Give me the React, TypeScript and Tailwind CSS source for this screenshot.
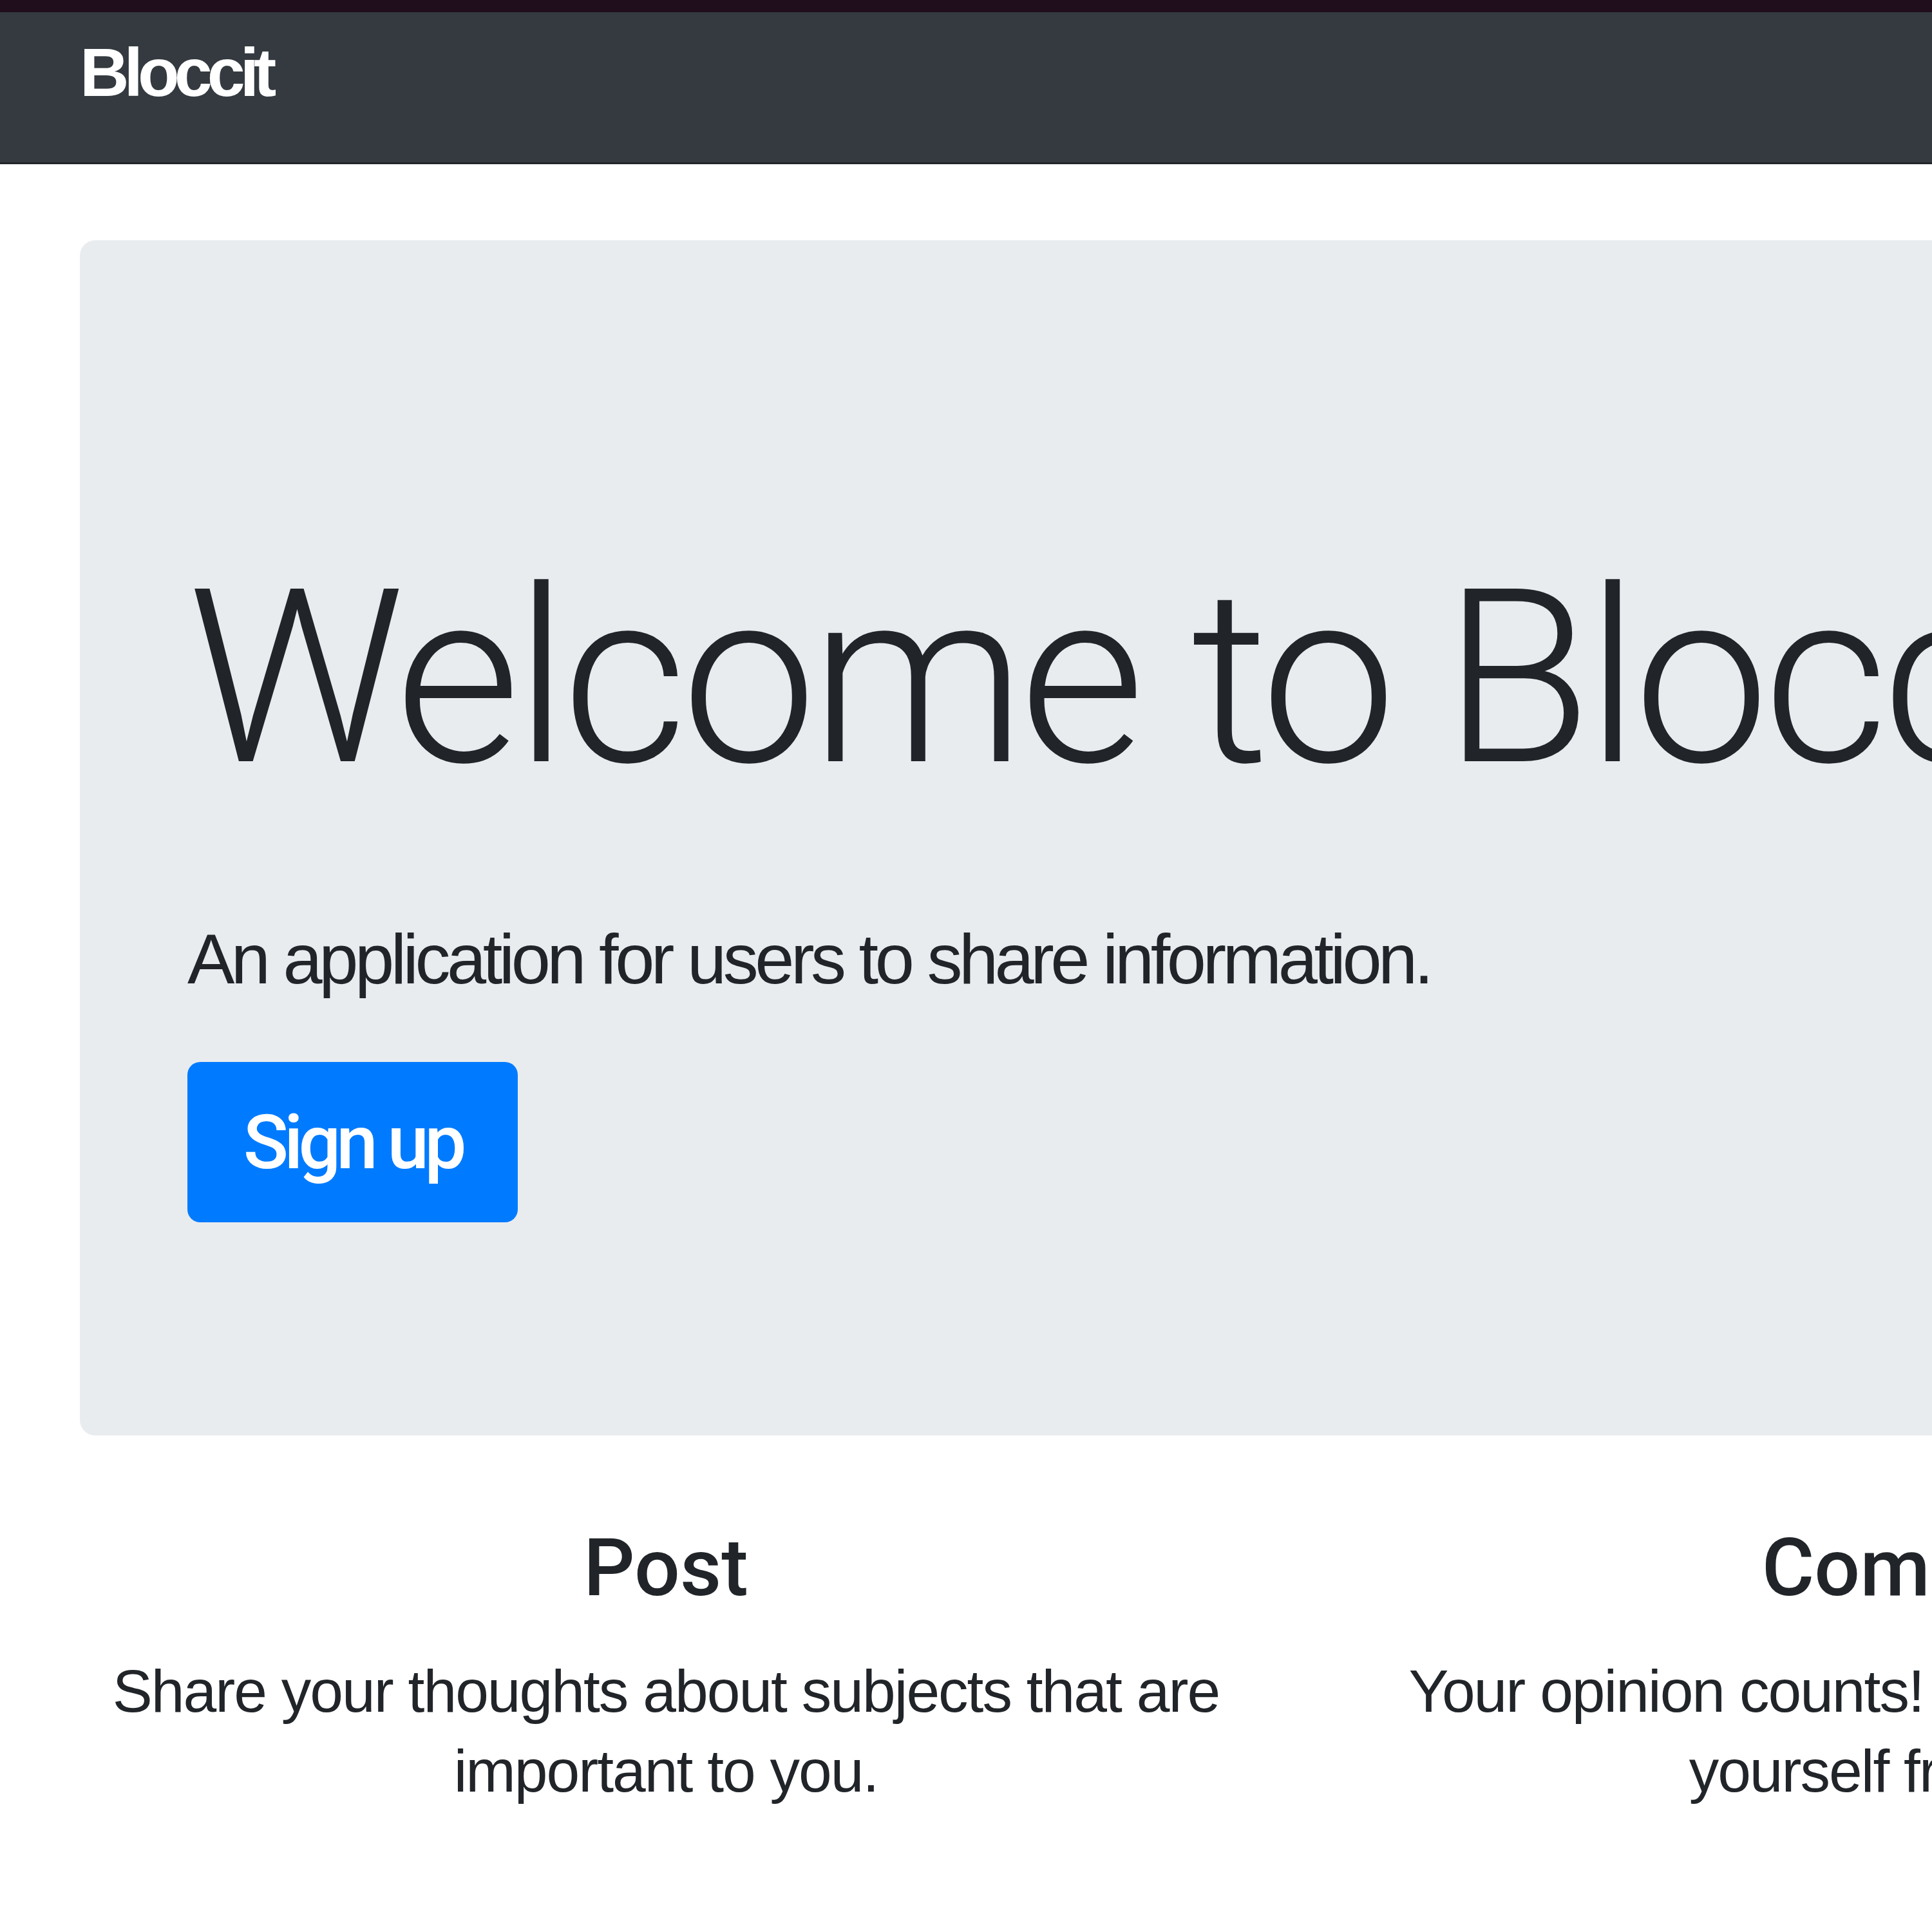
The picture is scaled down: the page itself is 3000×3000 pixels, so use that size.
import React from "react";

export default function App() {
  return (
    <div className="w-[3000px] h-[3000px] overflow-hidden bg-white text-[#212529]">
      <div className="h-[19px] bg-[#200e1d]" />
      <nav className="h-[236px] bg-[#343a40] border-b-[3px] border-[#23272b] pl-[124px] pt-[40px]">
        <span
          className="block text-white text-[106px] leading-none font-bold tracking-[-8px]"
          style={{ fontFamily: '"Liberation Sans", Arial, sans-serif' }}
        >
          Bloccit
        </span>
      </nav>
      <main className="w-[6000px] pl-[124px] pt-[118px]">
        <section className="w-[5000px] h-[1856px] bg-[#e9ecef] rounded-[24px] pl-[167px] pt-[492px] flex flex-col items-start">
          <h1
            className="text-[377px] leading-none font-light whitespace-nowrap tracking-[-10px]"
            style={{ fontFamily: 'Roboto, "Liberation Sans", sans-serif' }}
          >
            Welcome to Bloccit
          </h1>
          <p
            className="mt-[192px] text-[110px] leading-none tracking-[-5.5px] whitespace-nowrap"
            style={{ fontFamily: '"Liberation Sans", Arial, sans-serif' }}
          >
            An application for users to share information.
          </p>
          <button
            className="mt-[105px] w-[513px] h-[249px] rounded-[20px] bg-[#007bff] text-white flex items-center justify-center text-[116px] leading-none font-medium tracking-[-7px]"
            style={{ fontFamily: 'Roboto, "Liberation Sans", sans-serif' }}
          >
            Sign up
          </button>
        </section>
        <div className="flex -ml-[78px]">
          {[
            {
              title: "Post",
              text: "Share your thoughts about subjects that are important to you.",
            },
            {
              title: "Comment",
              text: "Your opinion counts! Comment to express yourself freely here.",
            },
            {
              title: "Vote",
              text: "Let everyone know which posts matter most to you.",
            },
          ].map((c) => (
            <div key={c.title} className="w-[1976px] px-[78px] text-center shrink-0">
              <h2
                className="mt-[143px] text-[125px] leading-none font-medium"
                style={{ fontFamily: 'Roboto, "Liberation Sans", sans-serif' }}
              >
                {c.title}
              </h2>
              <p
                className="mt-[67px] text-[93px] leading-[124px] tracking-[-2px]"
                style={{ fontFamily: '"Liberation Sans", Arial, sans-serif' }}
              >
                {c.text}
              </p>
            </div>
          ))}
        </div>
      </main>
    </div>
  );
}
